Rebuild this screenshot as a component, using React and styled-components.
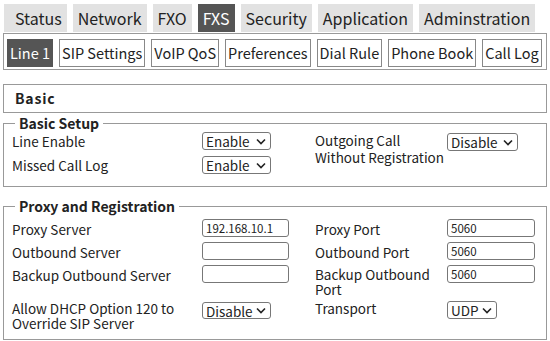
import React from "react";
import styled, { createGlobalStyle } from "styled-components";

const GlobalStyle = createGlobalStyle`
  html, body {
    margin: 0;
    padding: 0;
    background: #fff;
  }
  body {
    font-family: "Noto Sans CJK JP", "Noto Sans", sans-serif;
    color: #222;
  }
`;

const Page = styled.div`
  width: 550px;
  padding: 4px 3px 0 3px;
  box-sizing: border-box;
`;

const TopNav = styled.div`
  display: flex;
  gap: 6px;
  padding-left: 1px;
`;

const TopTab = styled.div`
  height: 28px;
  line-height: 28px;
  padding: 0 5px;
  font-size: 16px;
  white-space: nowrap;
  background: ${(p) => (p.active ? "#555" : "#e2e2e2")};
  color: ${(p) => (p.active ? "#fff" : "#222")};

  &:first-child {
    padding-left: 11px;
  }
`;

const SubNav = styled.div`
  margin-top: 1px;
  border: 1px solid #999;
  display: flex;
  gap: 6px;
  padding: 5px 5px 2px 3px;
`;

const SubTab = styled.div`
  height: 26px;
  line-height: 26px;
  padding: 0 2px;
  font-size: 14.5px;
  white-space: nowrap;
  border: 1px solid ${(p) => (p.active ? "#555" : "#888")};
  background: ${(p) => (p.active ? "#555" : "#fff")};
  color: ${(p) => (p.active ? "#fff" : "#222")};
`;

const SectionHeader = styled.div`
  margin-top: 14px;
  height: 27px;
  line-height: 27px;
  border: 1px solid #999;
  padding-left: 11px;
  font-size: 14px;
  font-weight: 700;
  letter-spacing: 0.8px;
`;

const Group = styled.fieldset`
  margin: ${(p) => p.gap}px 0 0 0;
  border: 1px solid #999;
  padding: 0 0 ${(p) => p.bottom}px 8px;
  min-width: 0;
`;

const Legend = styled.legend`
  font-size: 14px;
  font-weight: 700;
  padding: 0 4px;
  margin-left: 3px;
  line-height: 14px;
`;

const Grid = styled.div`
  display: grid;
  grid-template-columns: 190px 113px 132px 1fr;
  row-gap: ${(p) => p.rowGap}px;
  padding-top: ${(p) => p.top}px;
  align-items: start;
`;

const Label = styled.div`
  font-size: 13.5px;
  line-height: ${(p) => p.lh || 18}px;
  padding-top: ${(p) => p.pt || 0}px;
  white-space: nowrap;
  grid-row: ${(p) => p.row || "auto"};
  grid-column: ${(p) => p.col || "auto"};
`;

const SelectBox = styled.div`
  display: flex;
  align-items: center;
  justify-content: space-between;
  height: ${(p) => p.h || 18}px;
  box-sizing: border-box;
  width: ${(p) => p.w}px;
  margin-top: ${(p) => p.mt || 0}px;
  padding: 0 4px 0 3px;
  border: 1px solid #777;
  border-radius: 3px;
  font-size: 13.5px;
  line-height: 16px;
  grid-row: ${(p) => p.row || "auto"};
  grid-column: ${(p) => p.col || "auto"};
`;

const TextInput = styled.input`
  box-sizing: border-box;
  width: ${(p) => p.w}px;
  height: 18px;
  border: 1px solid #777;
  border-radius: 3px;
  padding: 0 3px;
  margin: 0;
  font-family: inherit;
  font-size: 11.5px;
  color: #222;
  background: #fff;
`;

const Chevron = () => (
  <svg width="10" height="7" viewBox="0 0 10 7">
    <path d="M1 1.5 L5 5.5 L9 1.5" fill="none" stroke="#222" strokeWidth="1.6" />
  </svg>
);

const Select = ({ value, ...rest }) => (
  <SelectBox {...rest}>
    <span>{value}</span>
    <Chevron />
  </SelectBox>
);

const topTabs = ["Status", "Network", "FXO", "FXS", "Security", "Application", "Adminstration"];
const subTabs = ["Line 1", "SIP Settings", "VoIP QoS", "Preferences", "Dial Rule", "Phone Book", "Call Log"];

export default function App() {
  return (
    <Page>
      <GlobalStyle />
      <TopNav>
        {topTabs.map((t) => (
          <TopTab key={t} active={t === "FXS"}>{t}</TopTab>
        ))}
      </TopNav>
      <SubNav>
        {subTabs.map((t) => (
          <SubTab key={t} active={t === "Line 1"}>{t}</SubTab>
        ))}
      </SubNav>

      <SectionHeader>Basic</SectionHeader>

      <Group gap={3} bottom={12}>
        <Legend>Basic Setup</Legend>
        <Grid rowGap={5} top={2}>
          <Label row={1} col={1}>Line Enable</Label>
          <Select value="Enable" w={69} row={1} col={2} />
          <Label row="1 / span 2" col={3} lh={17}>
            Outgoing Call
            <br />
            Without Registration
          </Label>
          <Select value="Disable" w={71} mt={1} row={1} col={4} />
          <Label row={2} col={1}>Missed Call Log</Label>
          <Select value="Enable" w={69} row={2} col={2} />
        </Grid>
      </Group>

      <Group gap={12} bottom={8}>
        <Legend>Proxy and Registration</Legend>
        <Grid rowGap={4} top={6}>
          <Label pt={1}>Proxy Server</Label>
          <TextInput w={87} value="192.168.10.1" readOnly />
          <Label pt={1}>Proxy Port</Label>
          <TextInput w={88} value="5060" readOnly />

          <Label pt={1}>Outbound Server</Label>
          <TextInput w={87} value="" readOnly />
          <Label pt={1}>Outbound Port</Label>
          <TextInput w={88} value="5060" readOnly />

          <Label pt={1}>Backup Outbound Server</Label>
          <TextInput w={87} value="" readOnly />
          <Label lh={15} pt={2}>
            Backup Outbound
            <br />
            Port
          </Label>
          <TextInput w={88} value="5060" readOnly />

          <Label lh={15}>
            Allow DHCP Option 120 to
            <br />
            Override SIP Server
          </Label>
          <Select value="Disable" w={69} h={17} mt={1} />
          <Label lh={15}>Transport</Label>
          <Select value="UDP" w={50} />
        </Grid>
      </Group>
    </Page>
  );
}
